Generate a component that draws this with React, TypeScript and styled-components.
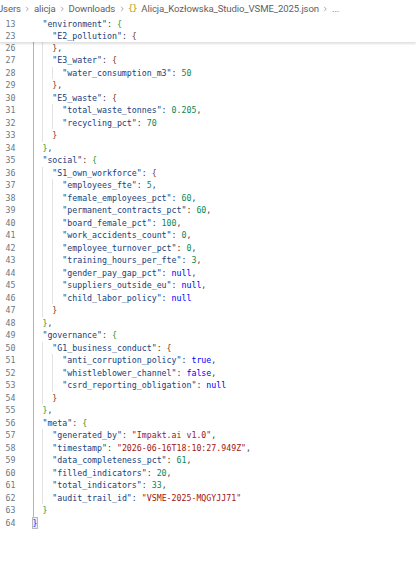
import React from "react";
import styled, { createGlobalStyle } from "styled-components";

const Global = createGlobalStyle`
  html, body { margin: 0; padding: 0; background: #ffffff; }
  #root { width: 416px; height: 573px; overflow: hidden; }
`;

const Window = styled.div`
  width: 416px;
  height: 573px;
  background: #ffffff;
  display: flex;
  flex-direction: column;
  overflow: hidden;
`;

const Breadcrumbs = styled.div`
  height: 17.5px;
  flex: none;
  display: flex;
  align-items: center;
  gap: 2.5px;
  margin-left: -3px;
  font-family: Roboto, "Liberation Sans", Arial, sans-serif;
  font-size: 9.6px;
  letter-spacing: -0.12px;
  color: #616161;
  white-space: nowrap;
`;

const Crumb = styled.span`
  color: #5f5f5f;
`;

const Chevron = styled.svg`
  width: 8px;
  height: 8px;
  flex: none;
  color: #8a8a8a;
`;

const JsonIcon = styled.span`
  font-family: "DejaVu Sans Mono", monospace;
  font-size: 8px;
  font-weight: bold;
  color: #c9b23a;
  letter-spacing: -0.5px;
  margin-right: 2px;
`;

const Sticky = styled.div`
  flex: none;
  position: relative;
  z-index: 2;
  background: #ffffff;
  box-shadow: 0 1.5px 2px rgba(0, 0, 0, 0.12);
`;

const Lines = styled.div`
  flex: 1;
  display: flex;
  flex-direction: column;
`;

const Row = styled.div<{ $h: number }>`
  display: flex;
  height: ${(p) => p.$h}px;
  align-items: center;
  font-family: "DejaVu Sans Mono", Menlo, monospace;
  font-size: 8.25px;
  white-space: pre;
`;

const LineNo = styled.span`
  width: 15.5px;
  flex: none;
  text-align: right;
  color: #6e7681;
  font-family: "DejaVu Sans Mono", Menlo, monospace;
`;

const Code = styled.span`
  margin-left: 17px;
  display: flex;
  height: 100%;
  align-items: center;
  color: #3b3b3b;
`;

const Guide = styled.span<{ $active: boolean; $show: boolean }>`
  display: inline-block;
  width: 2ch;
  height: 100%;
  box-sizing: border-box;
  border-left: 1px solid
    ${(p) => (p.$show ? (p.$active ? "#b4b4b4" : "#e3e3e3") : "transparent")};
`;

const Tok = styled.span<{ $c: string; $match?: boolean }>`
  color: ${(p) => p.$c};
  ${(p) =>
    p.$match
      ? "outline: 1px solid #b9b9b9; background: #e6ecf7; outline-offset: 0px;"
      : ""}
`;

const BRACKETS = ["#0431fa", "#319331", "#7b3814"];
const KEY = "#17407c";
const STR = "#a31515";
const NUM = "#098658";
const KW = "#0000ff";
const PUNC = "#3b3b3b";

type Line = { n: number; text: string };

const visible: Line[] = [
  [26, '    },'],
  [27, '    "E3_water": {'],
  [28, '      "water_consumption_m3": 50'],
  [29, '    },'],
  [30, '    "E5_waste": {'],
  [31, '      "total_waste_tonnes": 0.205,'],
  [32, '      "recycling_pct": 70'],
  [33, '    }'],
  [34, '  },'],
  [35, '  "social": {'],
  [36, '    "S1_own_workforce": {'],
  [37, '      "employees_fte": 5,'],
  [38, '      "female_employees_pct": 60,'],
  [39, '      "permanent_contracts_pct": 60,'],
  [40, '      "board_female_pct": 100,'],
  [41, '      "work_accidents_count": 0,'],
  [42, '      "employee_turnover_pct": 0,'],
  [43, '      "training_hours_per_fte": 3,'],
  [44, '      "gender_pay_gap_pct": null,'],
  [45, '      "suppliers_outside_eu": null,'],
  [46, '      "child_labor_policy": null'],
  [47, '    }'],
  [48, '  },'],
  [49, '  "governance": {'],
  [50, '    "G1_business_conduct": {'],
  [51, '      "anti_corruption_policy": true,'],
  [52, '      "whistleblower_channel": false,'],
  [53, '      "csrd_reporting_obligation": null'],
  [54, '    }'],
  [55, '  },'],
  [56, '  "meta": {'],
  [57, '    "generated_by": "Impakt.ai v1.0",'],
  [58, '    "timestamp": "2026-06-16T18:10:27.949Z",'],
  [59, '    "data_completeness_pct": 61,'],
  [60, '    "filled_indicators": 20,'],
  [61, '    "total_indicators": 33,'],
  [62, '    "audit_trail_id": "VSME-2025-MQGYJJ71"'],
  [63, '  }'],
  [64, '}'],
].map(([n, text]) => ({ n: n as number, text: text as string }));

const stickyLines: Line[] = [
  { n: 13, text: '  "environment": {' },
  { n: 23, text: '    "E2_pollution": {' },
];

type Token = { t: string; c: string; match?: boolean };

function tokenize(body: string, depthStart: number, isLast: boolean): { toks: Token[]; depth: number } {
  const toks: Token[] = [];
  let depth = depthStart;
  const re = /("(?:[^"\\]|\\.)*")(\s*:)?|(-?\d+(?:\.\d+)?)|(true|false|null)|([{}\[\]])|([,:])|(\s+)/g;
  let m: RegExpExecArray | null;
  while ((m = re.exec(body))) {
    if (m[1]) {
      toks.push({ t: m[1], c: m[2] ? KEY : STR });
      if (m[2]) toks.push({ t: m[2], c: PUNC });
    } else if (m[3]) toks.push({ t: m[3], c: NUM });
    else if (m[4]) toks.push({ t: m[4], c: KW });
    else if (m[5]) {
      if (m[5] === "{" || m[5] === "[") {
        depth += 1;
        toks.push({ t: m[5], c: BRACKETS[(depth - 1) % 3] });
      } else {
        toks.push({ t: m[5], c: BRACKETS[(depth - 1) % 3], match: isLast && depth === 1 });
        depth -= 1;
      }
    } else toks.push({ t: m[0], c: PUNC });
  }
  return { toks, depth };
}

function CodeLine({
  line,
  depth,
  h,
  guides,
  isLast,
}: {
  line: Line;
  depth: number;
  h: number;
  guides: boolean;
  isLast: boolean;
}) {
  const indent = line.text.match(/^ */)![0].length / 2;
  const body = line.text.trimStart();
  const { toks } = tokenize(body, depth, isLast);
  return (
    <Row $h={h}>
      <LineNo>{line.n}</LineNo>
      <Code>
        {Array.from({ length: indent }).map((_, i) => (
          <Guide key={i} $show={guides} $active={i === 0} />
        ))}
        {toks.map((tk, i) => (
          <Tok key={i} $c={tk.c} $match={tk.match}>
            {tk.t}
          </Tok>
        ))}
      </Code>
    </Row>
  );
}

const ChevronIcon = () => (
  <Chevron viewBox="0 0 16 16">
    <path d="M6 3.5 L10.5 8 L6 12.5" fill="none" stroke="currentColor" strokeWidth="1.4" />
  </Chevron>
);

export default function App() {
  let depth = 3;
  const rows = visible.map((l, idx) => {
    const d = depth;
    const { depth: nd } = tokenize(l.text.trimStart(), depth, false);
    depth = nd;
    return (
      <CodeLine
        key={l.n}
        line={l}
        depth={d}
        h={12.5}
        guides
        isLast={idx === visible.length - 1}
      />
    );
  });
  return (
    <Window>
      <Global />
      <Breadcrumbs>
        <Crumb>Users</Crumb>
        <ChevronIcon />
        <Crumb>alicja</Crumb>
        <ChevronIcon />
        <Crumb>Downloads</Crumb>
        <ChevronIcon />
        <JsonIcon>{"{}"}</JsonIcon>
        <Crumb>Alicja_Kozłowska_Studio_VSME_2025.json</Crumb>
        <ChevronIcon />
        <Crumb>...</Crumb>
      </Breadcrumbs>
      <Sticky>
        <CodeLine line={stickyLines[0]} depth={1} h={12} guides={false} isLast={false} />
        <CodeLine line={stickyLines[1]} depth={2} h={12} guides={false} isLast={false} />
      </Sticky>
      <Lines>{rows}</Lines>
    </Window>
  );
}
